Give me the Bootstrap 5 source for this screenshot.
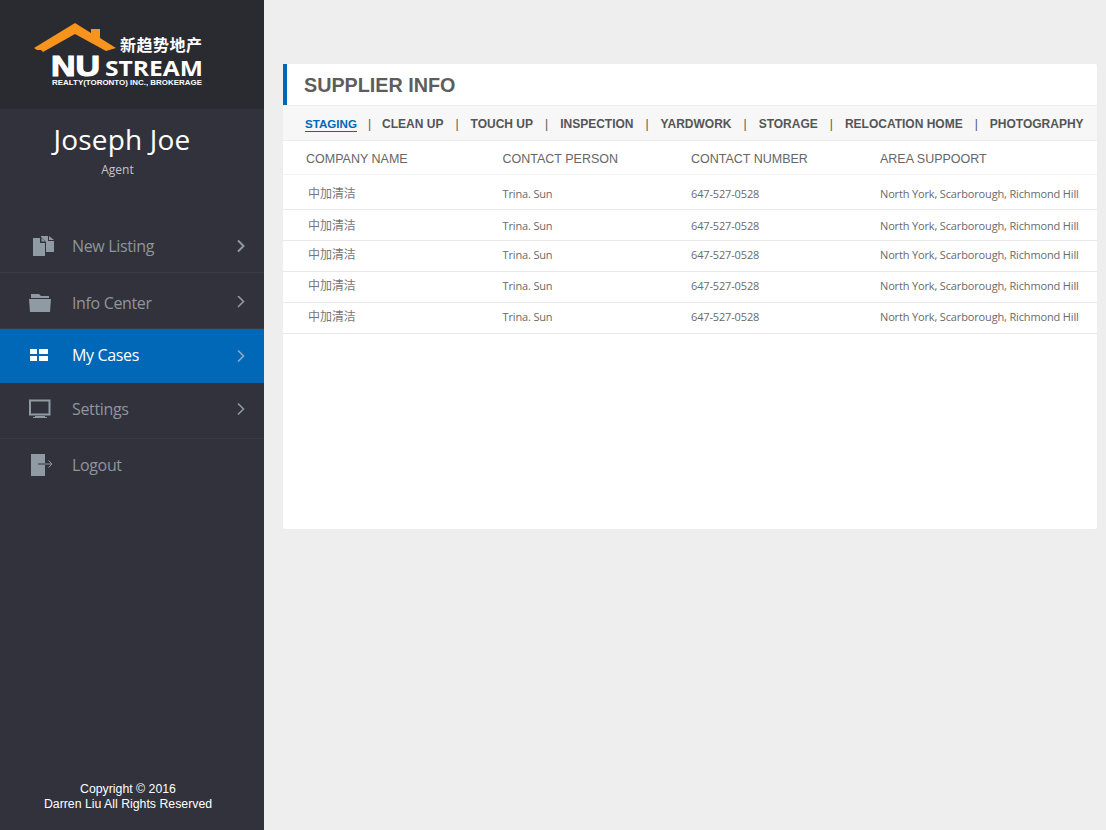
<!DOCTYPE html>
<html lang="en">
<head>
<meta charset="UTF-8">
<meta name="viewport" content="width=device-width, initial-scale=1.0">
<title>Supplier Info</title>
<link href="https://cdn.jsdelivr.net/npm/bootstrap@5.3.0/dist/css/bootstrap.min.css" rel="stylesheet">
<style>
    html, body { height: 100%; }
    body { background: #eeeeee; font-family: "Liberation Sans", Arial, sans-serif; overflow: hidden; }

    /* sidebar */
    .side-bar { width: 264px; height: 830px; background: #31323c; flex-shrink: 0; }
    .logo-box { height: 109px; background: #2a2b31; padding: 21px 0 0 32px; }
    .logo-box svg { display: block; }
    .user-box { height: 110px; padding-top: 12px; font-family: "Open Sans", sans-serif; color: #fff; }
    .user-name { font-size: 28px; line-height: 36px; letter-spacing: 0.2px; margin-right: 20px; text-align: center; }
    .user-role { font-size: 12px; line-height: 22px; margin-top: 2px; color: #c4c5c9; padding-right: 29px; }

    .side-link { display: flex; align-items: center; color: #8f959c; text-decoration: none; font-family: "Open Sans", sans-serif; font-size: 16px; letter-spacing: -0.35px; border-bottom: 1px solid #393a44; padding-left: 28px; padding-right: 18px; }
    .side-link .link-icon { width: 44px; flex-shrink: 0; display: flex; }
    .side-link .link-arrow { margin-left: auto; display: flex; }
    .side-link.on { background: #0068b7; color: #fff; border-bottom-color: #0068b7; }
    .h-a { height: 54px; }
    .h-b { height: 56px; }
    .push-down { padding-top: 4px; }
    .push-up { padding-bottom: 4px; }
    .push-up-sm { padding-bottom: 2px; }

    .side-foot { font-size: 12.3px; line-height: 15px; color: #fff; text-align: center; padding-bottom: 18px; padding-right: 8px; }

    /* content */
    .main-area { padding: 64px 9px 0 19px; flex-grow: 1; min-width: 0; }
    .info-panel { height: 465px; background: #fff; border-radius: 2px; }
    .panel-title { height: 41px; border-left: 4px solid #0068b7; padding-left: 17px; font-size: 19.75px; line-height: 43px; font-weight: 700; color: #5d5d5d; margin: 0; }
    .tab-bar { height: 36px; background: #f7f7f7; border-top: 1px solid #ededed; border-bottom: 1px solid #ededed; padding: 2px 0 0 22px; font-size: 12px; font-weight: 700; color: #555; white-space: nowrap; }
    .tab-bar a { color: #555; text-decoration: none; }
    .tab-bar a.on { color: #0068b7; font-size: 11.6px; border-bottom: 1px solid #0068b7; line-height: 14px; }
    .tab-sep { font-weight: 400; margin: 0 12px; }
    .tab-sep-first { margin-left: 11px; margin-right: 11px; }

    .supplier-table { table-layout: fixed; width: 100%; margin: 0; font-family: "Open Sans", "Noto Sans CJK SC", sans-serif; }
    .supplier-table th { font-family: "Liberation Sans", Arial, sans-serif; font-size: 12.5px; font-weight: 400; color: #666; height: 33px; padding: 5px 0 0; border-bottom: 1px solid #f2f2f2; vertical-align: middle; }
    .supplier-table td { font-size: 11px; letter-spacing: -0.15px; color: #6a6a6a; padding: 0; height: 31px; border-bottom: 1px solid #e9e9e9; vertical-align: middle; }
    .supplier-table tr.first-row td { height: 35px; padding-top: 6px; }
    .supplier-table tr.second-row td { padding-top: 4px; }
    .col-company { width: 219.5px; padding-left: 23px !important; }
    .col-person { width: 188.5px; }
    .col-phone { width: 189px; }
    .supplier-table td.cn-name { padding: 0 0 2px 25px; font-size: 12px; letter-spacing: -0.05px; color: #777; }
    .supplier-table tr.first-row td.cn-name { padding: 4px 0 0 25px; }
    .supplier-table tr.second-row td.cn-name { padding: 2px 0 0 25px; }
</style>
</head>
<body>
<div class="d-flex">

    <!-- sidebar -->
    <aside class="side-bar d-flex flex-column">
        <div class="logo-box">
            <svg width="175" height="68" viewBox="0 0 175 68">
                <path d="M2 27 L43 2 L59 12 L59 8 L68 8 L68 17 L84 27 L74 30 L43 13 L11 31 L9 29 L5 29 Z" fill="#f7941d"/>
                <text x="88" y="30" font-family="'Noto Sans CJK SC', sans-serif" font-size="16" font-weight="700" fill="#fff" textLength="82">新趋势地产</text>
                <text x="19" y="55" font-family="'Liberation Sans', sans-serif" font-size="29" font-weight="700" fill="#fff" stroke="#fff" stroke-width="1.1" textLength="49" lengthAdjust="spacingAndGlyphs">NU</text>
                <text x="73" y="55" font-family="'Open Sans', sans-serif" font-size="21" font-weight="700" fill="#fff" textLength="98" lengthAdjust="spacingAndGlyphs">STREAM</text>
                <text x="20" y="64" font-family="'Liberation Sans', sans-serif" font-size="8" font-weight="700" fill="#fff" textLength="150" lengthAdjust="spacingAndGlyphs">REALTY(TORONTO) INC., BROKERAGE</text>
            </svg>
        </div>
        <div class="user-box text-center">
            <div class="user-name">Joseph Joe</div>
            <div class="user-role">Agent</div>
        </div>
        <nav class="d-flex flex-column">
            <a class="side-link h-a" href="#"><span class="link-icon">
                <svg width="26" height="22" viewBox="0 0 26 22"><path d="M5 3 H12 V8 H17 V21 H5 Z M13.500 3 L17 6.500 H13.500 Z" fill="#8f9aa3"/><path d="M13 1 H20 V6 H26 V17 H18 V7 L13 2 Z M21 1 L26 5 H21 Z" fill="#8f9aa3"/></svg>
            </span>New Listing<span class="link-arrow"><svg width="10" height="14" viewBox="0 0 10 14"><path d="M2 1.500 L7.500 7 L2 12.500" fill="none" stroke="#8f9aa3" stroke-width="2"/></svg></span></a>
            <a class="side-link h-b push-down" href="#"><span class="link-icon">
                <svg width="24" height="20" viewBox="0 0 24 20"><path d="M3 1 H11 L13 3 H21 V5 H3 Z M1 6 H23 L22 19 H2 Z" fill="#8f9aa3"/></svg>
            </span>Info Center<span class="link-arrow"><svg width="10" height="14" viewBox="0 0 10 14"><path d="M2 0 L7.500 5.500 L2 11" fill="none" stroke="#8f9aa3" stroke-width="1.600"/></svg></span></a>
            <a class="side-link on h-a push-up-sm" href="#"><span class="link-icon">
                <svg width="20" height="14" viewBox="0 0 20 14"><path d="M2 1 H9 V6 H2 Z M11 1 H20 V6 H11 Z M2 8 H9 V13 H2 Z M11 8 H20 V13 H11 Z" fill="#fff"/></svg>
            </span>My Cases<span class="link-arrow"><svg width="10" height="14" viewBox="0 0 10 14"><path d="M2 2.500 L7.500 8 L2 13.500" fill="none" stroke="#8fa9c4" stroke-width="1.600"/></svg></span></a>
            <a class="side-link h-b push-up" href="#"><span class="link-icon">
                <svg width="24" height="20" viewBox="0 0 24 20"><path d="M2 1.500 H21.500 V15.500 H2 Z" fill="none" stroke="#8f9aa3" stroke-width="2"/><path d="M7 17 H17 V18 H19 V19 H5 V18 H7 Z" fill="#8f9aa3"/></svg>
            </span>Settings<span class="link-arrow"><svg width="10" height="14" viewBox="0 0 10 14"><path d="M2 1.500 L7.500 7 L2 12.500" fill="none" stroke="#8f9aa3" stroke-width="1.600"/></svg></span></a>
            <a class="side-link h-b border-0 push-up" href="#"><span class="link-icon">
                <svg width="24" height="22" viewBox="0 0 24 22"><path d="M3 0 H17 V22 H3 Z" fill="#8f9aa3"/><path d="M10 10 H17" fill="none" stroke="#31323c" stroke-width="1"/><path d="M17 10 H24 M20.500 6.500 L24 10 L20.500 13.500" fill="none" stroke="#8f9aa3" stroke-width="1"/></svg>
            </span>Logout</a>
        </nav>
        <div class="side-foot mt-auto">Copyright © 2016<br>Darren Liu All Rights Reserved</div>
    </aside>

    <!-- content -->
    <main class="main-area">
        <div class="info-panel">
            <h1 class="panel-title">SUPPLIER INFO</h1>
            <div class="tab-bar d-flex align-items-center">
                <a class="on" href="#">STAGING</a><span class="tab-sep tab-sep-first">|</span>
                <a href="#">CLEAN UP</a><span class="tab-sep">|</span>
                <a href="#">TOUCH UP</a><span class="tab-sep">|</span>
                <a href="#">INSPECTION</a><span class="tab-sep">|</span>
                <a href="#">YARDWORK</a><span class="tab-sep">|</span>
                <a href="#">STORAGE</a><span class="tab-sep">|</span>
                <a href="#">RELOCATION HOME</a><span class="tab-sep">|</span>
                <a href="#">PHOTOGRAPHY</a>
            </div>
            <table class="supplier-table">
                <thead>
                    <tr><th class="col-company">COMPANY NAME</th><th class="col-person">CONTACT PERSON</th><th class="col-phone">CONTACT NUMBER</th><th>AREA SUPPOORT</th></tr>
                </thead>
                <tbody>
                    <tr class="first-row"><td class="cn-name">中加清洁</td><td>Trina. Sun</td><td>647-527-0528</td><td>North York, Scarborough, Richmond Hill</td></tr>
                    <tr class="second-row"><td class="cn-name">中加清洁</td><td>Trina. Sun</td><td>647-527-0528</td><td>North York, Scarborough, Richmond Hill</td></tr>
                    <tr><td class="cn-name">中加清洁</td><td>Trina. Sun</td><td>647-527-0528</td><td>North York, Scarborough, Richmond Hill</td></tr>
                    <tr><td class="cn-name">中加清洁</td><td>Trina. Sun</td><td>647-527-0528</td><td>North York, Scarborough, Richmond Hill</td></tr>
                    <tr><td class="cn-name">中加清洁</td><td>Trina. Sun</td><td>647-527-0528</td><td>North York, Scarborough, Richmond Hill</td></tr>
                </tbody>
            </table>
        </div>
    </main>
</div>
<script src="https://cdn.jsdelivr.net/npm/bootstrap@5.3.0/dist/js/bootstrap.bundle.min.js"></script>
</body>
</html>
